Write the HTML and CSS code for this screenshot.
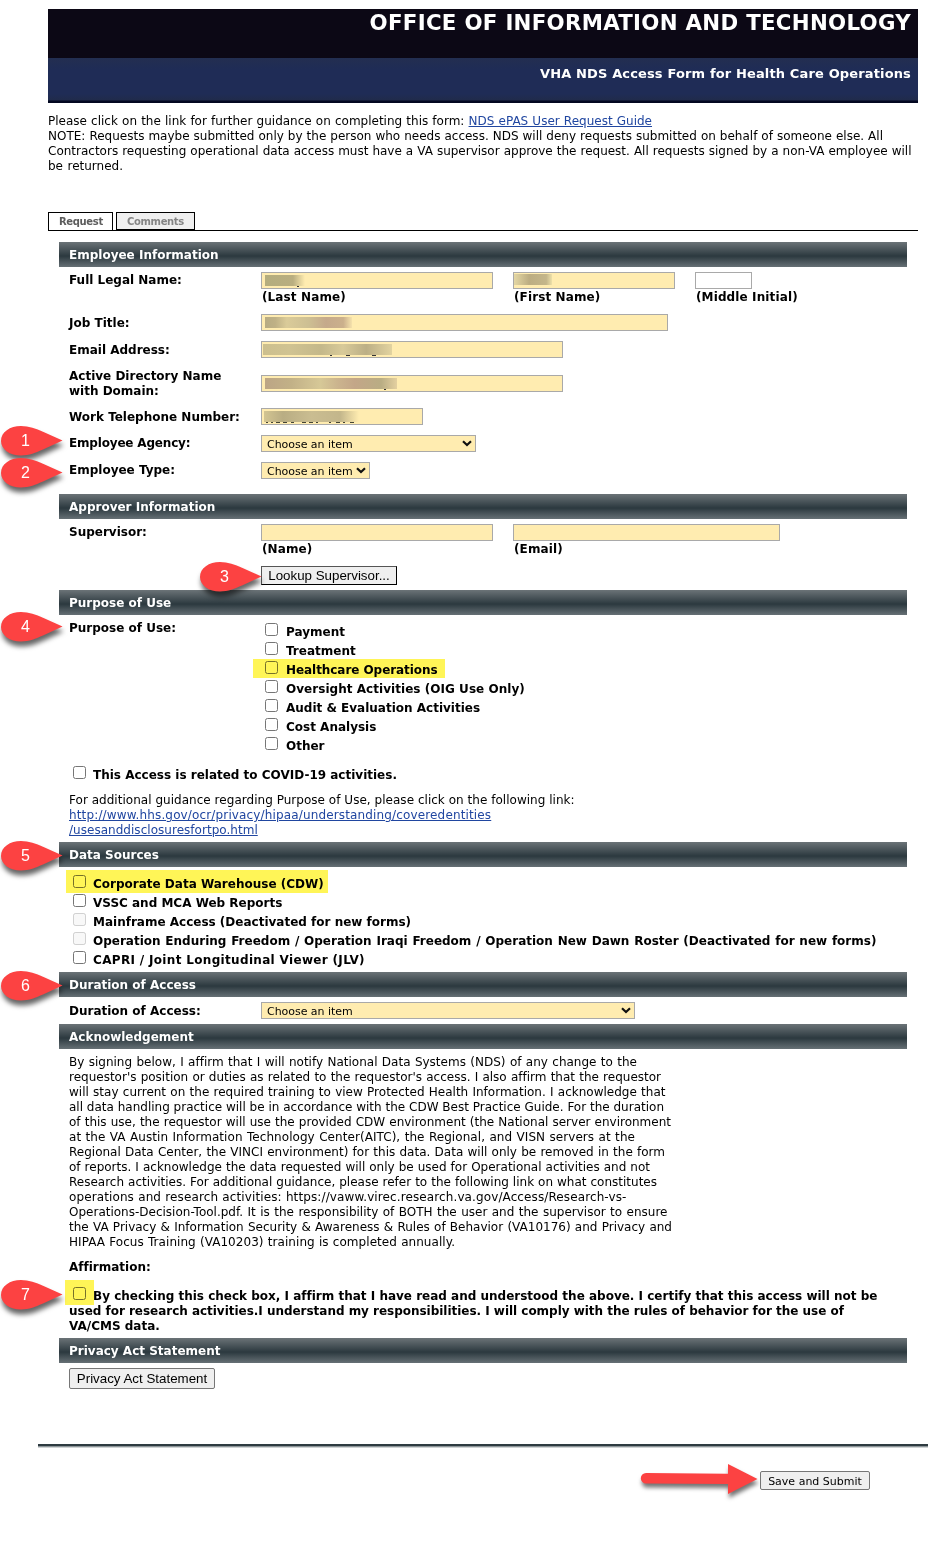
FILE: index.html
```html
<!DOCTYPE html>
<html lang="en">
<head>
<meta charset="utf-8">
<title>VHA NDS Access Form for Health Care Operations</title>
<link rel="stylesheet" href="styles.css">
</head>
<body>
<svg class="defs" width="0" height="0">
  <symbol id="pin" viewBox="0 0 62 30"><path d="M0 15C0 6 9 0 20 0C28 0 35 2.500 42 5.700L61.500 14.500L42 23.500C35 26.500 28 29.500 20 29.500C9 29.500 0 23.500 0 15Z" fill="#fc4242"/></symbol>
</svg>
<div class="page">
  <header class="banner">
    <h1 class="banner-title">OFFICE OF INFORMATION AND TECHNOLOGY</h1>
    <h2 class="banner-sub">VHA NDS Access Form for Health Care Operations</h2>
  </header>

  <div class="intro">
    <span class="line">Please click on the link for further guidance on completing this form: <a href="#">NDS ePAS User Request Guide</a></span>
    <span class="line">NOTE: Requests maybe submitted only by the person who needs access. NDS will deny requests submitted on behalf of someone else. All</span>
    <span class="line">Contractors requesting operational data access must have a VA supervisor approve the request. All requests signed by a non-VA employee will</span>
    <span class="line">be returned.</span>
  </div>

  <nav class="tabs"><span class="tab tab-on">Request</span><span class="tab">Comments</span></nav>

  <main class="form">
    <h3 class="bar">Employee Information</h3>
    <div class="body employee">
      <div class="row row-name"><label class="lab top">Full Legal Name:</label>
        <div class="fields">
          <div class="field w-last"><div class="box req"><i class="mask m1"></i></div><span>(Last Name)</span></div>
          <div class="field w-first"><div class="box req"><i class="mask m2"></i></div><span>(First Name)</span></div>
          <div class="field w-mi"><div class="box"></div><span>(Middle Initial)</span></div>
        </div></div>
      <div class="row"><label class="lab">Job Title:</label><div class="box req w-job"><i class="mask m3"></i></div></div>
      <div class="row"><label class="lab">Email Address:</label><div class="box req w-mail"><i class="mask m4"></i></div></div>
      <div class="row row-ad"><label class="lab top">Active Directory Name<br>with Domain:</label><div class="box req w-mail ad"><i class="mask m5"></i></div></div>
      <div class="row"><label class="lab">Work Telephone Number:</label><div class="box req w-first"><i class="mask m6"></i></div></div>
      <div class="row"><label class="lab top tight">Employee Agency:</label><select class="w-agency"><option>Choose an item</option></select></div>
      <div class="row row-last"><label class="lab top">Employee Type:</label><select class="w-type"><option>Choose an item</option></select></div>
    </div>

    <h3 class="bar">Approver Information</h3>
    <div class="body">
      <div class="row row-name"><label class="lab top">Supervisor:</label>
        <div class="fields">
          <div class="field w-last"><div class="box req"></div><span>(Name)</span></div>
          <div class="field w-supmail"><div class="box req"></div><span>(Email)</span></div>
        </div></div>
      <div class="row row-lookup"><span></span><button class="btn lookup">Lookup Supervisor...</button></div>
    </div>

    <h3 class="bar">Purpose of Use</h3>
    <div class="body purpose">
      <div class="row row-purpose"><span class="lab top">Purpose of Use:</span>
        <div class="checks">
          <label class="check"><input type="checkbox">Payment</label>
          <label class="check"><input type="checkbox">Treatment</label>
          <label class="check hl hl-health"><input type="checkbox">Healthcare Operations</label>
          <label class="check wide"><input type="checkbox">Oversight Activities (OIG Use Only)</label>
          <label class="check"><input type="checkbox">Audit &amp; Evaluation Activities</label>
          <label class="check"><input type="checkbox">Cost Analysis</label>
          <label class="check"><input type="checkbox">Other</label>
        </div></div>
      <label class="check covid"><input type="checkbox">This Access is related to COVID-19 activities.</label>
      <div class="guide">For additional guidance regarding Purpose of Use, please click on the following link:<br><a href="#"><span class="url">http://www.hhs.gov/ocr/privacy/hipaa/understanding/coveredentities</span><br>/usesanddisclosuresfortpo.html</a></div>
    </div>

    <h3 class="bar">Data Sources</h3>
    <div class="body sources">
      <label class="check hl hl-cdw"><input type="checkbox">Corporate Data Warehouse (CDW)</label>
      <label class="check"><input type="checkbox">VSSC and MCA Web Reports</label>
      <label class="check"><input type="checkbox" disabled>Mainframe Access (Deactivated for new forms)</label>
      <label class="check oef"><input type="checkbox" disabled>Operation Enduring Freedom / Operation Iraqi Freedom / Operation New Dawn Roster (Deactivated for new forms)</label>
      <label class="check capri"><input type="checkbox">CAPRI / Joint Longitudinal Viewer (JLV)</label>
    </div>

    <h3 class="bar">Duration of Access</h3>
    <div class="body">
      <div class="row row-duration"><label class="lab">Duration of Access:</label><select class="w-duration"><option>Choose an item</option></select></div>
    </div>

    <h3 class="bar">Acknowledgement</h3>
    <div class="body ack">
      <p class="ack-text">
        <span class="line">By signing below, I affirm that I will notify National Data Systems (NDS) of any change to the</span>
        <span class="line">requestor's position or duties as related to the requestor's access. I also affirm that the requestor</span>
        <span class="line">will stay current on the required training to view Protected Health Information. I acknowledge that</span>
        <span class="line">all data handling practice will be in accordance with the CDW Best Practice Guide. For the duration</span>
        <span class="line">of this use, the requestor will use the provided CDW environment (the National server environment</span>
        <span class="line">at the VA Austin Information Technology Center(AITC), the Regional, and VISN servers at the</span>
        <span class="line">Regional Data Center, the VINCI environment) for this data. Data will only be removed in the form</span>
        <span class="line">of reports. I acknowledge the data requested will only be used for Operational activities and not</span>
        <span class="line">Research activities. For additional guidance, please refer to the following link on what constitutes</span>
        <span class="line">operations and research activities: https://vaww.virec.research.va.gov/Access/Research-vs-</span>
        <span class="line">Operations-Decision-Tool.pdf. It is the responsibility of BOTH the user and the supervisor to ensure</span>
        <span class="line">the VA Privacy &amp; Information Security &amp; Awareness &amp; Rules of Behavior (VA10176) and Privacy and</span>
        <span class="line">HIPAA Focus Training (VA10203) training is completed annually.</span>
      </p>
      <p class="affirm-title">Affirmation:</p>
      <label class="affirm"><span class="hl hl-box"><input type="checkbox"></span>By checking this check box, I affirm that I have read and understood the above. I certify that this access will not be<br><span class="affirm-mid">used for research activities.I understand my responsibilities. I will comply with the rules of behavior for the use of</span><br>VA/CMS data.</label>
    </div>

    <h3 class="bar">Privacy Act Statement</h3>
    <div class="body privacy"><button class="btn">Privacy Act Statement</button></div>
  </main>

  <footer class="footer">
    <svg class="arrow" width="126" height="40" viewBox="0 0 126 40"><path d="M8 14L90 14.700V5L119.500 20L90 35V25L8 24.400A5.200 5.200 0 0 1 8 14Z" fill="#fc4242"/></svg>
    <button class="btn save">Save and Submit</button>
  </footer>

  <div class="pins">
    <div class="pin p1"><svg><use href="#pin"/></svg><b>1</b></div>
    <div class="pin p2"><svg><use href="#pin"/></svg><b>2</b></div>
    <div class="pin p3"><svg><use href="#pin"/></svg><b>3</b></div>
    <div class="pin p4"><svg><use href="#pin"/></svg><b>4</b></div>
    <div class="pin p5"><svg><use href="#pin"/></svg><b>5</b></div>
    <div class="pin p6"><svg><use href="#pin"/></svg><b>6</b></div>
    <div class="pin p7"><svg><use href="#pin"/></svg><b>7</b></div>
  </div>
</div>
</body>
</html>
```

FILE: styles.css
```css
* { box-sizing: border-box; }
body { margin: 0; background: #fff; color: #000; font: 12px/15px Verdana, "DejaVu Sans", sans-serif; font-variant-ligatures: none; }
h1, h2, h3, p { margin: 0; }
a { color: #2046a0; text-decoration: underline; }
.defs { display: block; }
.page { position: relative; width: 932px; height: 1562px; overflow: hidden; padding-top: 9px; white-space: nowrap; }
.line { display: block; white-space: normal; text-align-last: justify; height: 15px; white-space: nowrap; }

/* banner */
.banner { margin: 0 14px 0 48px; height: 94px; color: #fff; text-align: right; background: linear-gradient(#0c0815 0 49px, #232e50 49px, #1f2c56 60px, #1f2c56 85px, #202b4b 91px, #020720 92px 94px); }
.banner-title { height: 49px; padding-right: 7px; font-size: 21.300px; line-height: 27px; letter-spacing: .3px; }
.banner-sub { padding: 8px 7px 0 0; font-size: 13px; line-height: 16px; letter-spacing: .14px; }

.intro { margin: 11px 0 0 48px; height: 98px; }
.intro .line:nth-child(1) { width: 604px; }
.intro .line:nth-child(2) { width: 835px; }
.intro .line:nth-child(3) { width: 863.500px; }
.intro .line:nth-child(4) { width: 75px; }

/* tabs */
.tabs { display: flex; gap: 3px; height: 19px; margin: 0 14px 11px 48px; border-bottom: 1px solid #000; }
.tab { height: 18px; border: 1px solid #000; padding: 0 10px; font: bold 10px/18px Verdana, "DejaVu Sans", sans-serif; letter-spacing: -.35px; color: #858585; background: #efefef; width: 79px; }
.tab-on { color: #5c5c5c; background: #fff; width: 65px; border-bottom: 0; }

/* form sections */
.form { margin: 0 25px 0 59px; }
.bar { height: 25px; padding-left: 10px; font-size: 12px; line-height: 27px; color: #fff; background: linear-gradient(#6b7377, #2e3b41 54%, #2e3b41 58%, #667075); }
.body { padding: 5px 10px 0; }
.row { display: grid; grid-template-columns: 192px auto; justify-content: start; align-items: start; height: 27px; }
.row-name { height: 42px; }
.row-ad { height: 40px; }
.row-last { height: 32px; }
.row-lookup { height: 24px; }
.row-duration { height: 22px; }
.row-purpose { height: 146px; }
.lab { font-weight: bold; padding-top: 2px; }
.lab.top { padding-top: 1px; }
.tight { letter-spacing: -.18px; }
.fields { display: flex; gap: 20px; }
.field span { display: block; font-weight: bold; padding: 1px 0 0 1px; letter-spacing: .12px; }
.box { position: relative; height: 17px; border: 1px solid #a9a9a9; background: #fff; }
.req, select { background-color: #ffecb0; }
.ad { margin-top: 7px; }
.w-last { width: 232px; }
.w-first { width: 162px; }
.w-mi { width: 57px; }
.w-job { width: 407px; }
.w-mail { width: 302px; }
.w-supmail { width: 267px; }
.w-agency { width: 215px; }
.w-type { width: 109px; }
.w-duration { width: 374px; }
select { appearance: none; height: 17px; margin: 0; padding: 1px 0 0 5px; border: 1px solid #a9a9a9; border-radius: 0; font: 11px/15px Verdana, "DejaVu Sans", sans-serif; letter-spacing: -.04px; color: #000; background-image: url("data:image/svg+xml,%3Csvg xmlns='http://www.w3.org/2000/svg' width='10' height='7'%3E%3Cpath d='M1 1.200L5 5L9 1.200' fill='none' stroke='%23101010' stroke-width='2.200'/%3E%3C/svg%3E"); background-repeat: no-repeat; background-position: right 3px top 4px; }

/* redacted values */
.mask { display: block; position: absolute; left: 3px; top: 2px; height: 11px; }
.m1 { width: 40px; background: linear-gradient(90deg, #b4ad7e, #b9ae80 70%, #ffecb0); }
.m2 { left: 0; width: 38px; top: 1px; background: linear-gradient(90deg, #e4d7a4, #bcad82 40%, #c4b68a 85%, #ede0a9); }
.m3 { width: 87px; background: linear-gradient(90deg, #b7ab83, #bfb186 12%, #dacb99 25%, #cdbf93 50%, #c5a98b 70%, #cbb08c 90%, #f5e2ac); }
.m4 { left: 1px; width: 129px; background: linear-gradient(90deg, #ccbf8e, #d0c392 20%, #c4b88a 45%, #d8ca99 62%, #bcaf85 80%, #e2d3a0); }
.m5 { width: 132px; background: linear-gradient(90deg, #bca585, #c2b187 20%, #d6c897 42%, #cbb48e 55%, #c3a688 68%, #b9ad84 88%, #e4d0a0); }
.m6 { left: 2px; width: 95px; background: linear-gradient(90deg, #d3c592, #b9ad83 20%, #cabd91 50%, #c3b68b 80%, #ffecb0); }
.m4::after, .m5::after, .m6::after, .m1::after { content: ""; position: absolute; top: 11px; height: 1px; }
.m1::after { left: 32px; width: 2px; background: #333; }
.m4::after { left: 67px; width: 46px; background: linear-gradient(90deg, #333 0 2px, transparent 2px 16px, #333 16px 20px, transparent 20px 42px, #333 42px); }
.m5::after { left: 119px; width: 2px; background: #333; }
.m6::after { left: 2px; width: 88px; background: linear-gradient(90deg, #443 0 2px, transparent 2px 5px, #443 5px 7px, transparent 7px 10px, #443 10px 14px, transparent 14px 17px, #443 17px 21px, transparent 21px 25px, #443 25px 28px, transparent 28px 36px, #443 36px 40px, transparent 40px 43px, #443 43px 47px, transparent 47px 50px, #443 50px 52px, transparent 52px 63px, #443 63px 65px, transparent 65px 70px, #443 70px 74px, transparent 74px 77px, #443 77px 79px, transparent 79px 84px, #443 84px); }

/* buttons */
.btn { height: 21px; width: 146px; padding: 0; border: 1px solid #767676; border-radius: 2px; background: #efefef; color: #000; font: 13.333px/18px "Liberation Sans", Arial, sans-serif; white-space: nowrap; }
.lookup { width: 136px; height: 19px; border-color: #555 #000 #000 #555; border-radius: 0; line-height: 16px; }

/* checkboxes */
.check, .affirm { font-weight: bold; }
.check { position: relative; display: flex; height: 19px; line-height: 19px; }
.check input, .affirm input { flex: none; width: 13px; height: 13px; margin: 0 8px 0 4px; }
.check input { margin-right: 8px; }
.wide { letter-spacing: .04px; }
.checks { padding-top: 3px; }
.covid { height: 26px; }
.covid input, .sources input { margin-right: 7px; }
.sources { padding-top: 8px; height: 105px; }
.oef { word-spacing: .6px; }
.capri { letter-spacing: .33px; }
.guide { height: 50px; padding-top: 1px; letter-spacing: .03px; }
.url { letter-spacing: .145px; }
.hl::before { content: ""; position: absolute; background: #fff557; mix-blend-mode: multiply; z-index: 1; }
.hl-health { letter-spacing: -.06px; }
.hl-health::before { left: -8px; top: -2px; width: 192px; height: 19px; }
.hl-cdw::before { left: -3px; top: -5px; width: 262px; height: 23px; }
.hl-box { position: relative; display: inline-block; width: 24px; height: 13px; vertical-align: 0; }
.hl-box::before { left: -4px; top: -7px; width: 29px; height: 25px; }

/* acknowledgement */
.ack { height: 289px; }
.ack-text { height: 205px; padding-top: 1px; }
.ack-text .line:nth-child(1) { width: 568px; }
.ack-text .line:nth-child(2) { width: 592px; }
.ack-text .line:nth-child(3) { width: 596.500px; }
.ack-text .line:nth-child(4) { width: 595px; }
.ack-text .line:nth-child(5) { width: 602px; }
.ack-text .line:nth-child(6) { width: 566px; letter-spacing: .06px; }
.ack-text .line:nth-child(7) { width: 596px; }
.ack-text .line:nth-child(8) { width: 581px; }
.ack-text .line:nth-child(9) { width: 588px; }
.ack-text .line:nth-child(10) { width: 557.500px; letter-spacing: .11px; }
.ack-text .line:nth-child(11) { width: 598.500px; }
.ack-text .line:nth-child(12) { width: 603px; }
.ack-text .line:nth-child(13) { width: 386px; letter-spacing: .05px; }
.affirm-title { font-weight: bold; height: 28px; padding-top: 1px; }
.affirm { display: block; }
.affirm-mid { letter-spacing: -.025px; }
.affirm input { display: block; margin: 0 0 0 4px; }

.privacy { height: 81px; }

/* footer */
.footer { display: flex; margin-left: 38px; width: 890px; border-top: 2px solid #2e3b41; box-shadow: inset 0 1px #8d9599, inset 0 2px #d0d4d5; }
.arrow { margin: 13px 0 0 600px; filter: drop-shadow(1px 4px 2px rgba(0,0,0,.55)); flex: none; }
.save { width: 110px; height: 19px; margin: 25px 0 0 -4px; padding-top: 1px; font: 11px/17px Verdana, "DejaVu Sans", sans-serif; }

/* numbered callouts */
.pin { position: absolute; left: 1px; width: 62px; height: 30px; color: #fff; font: 16px/30px "Liberation Sans", Arial, sans-serif; }
.pin svg { position: absolute; left: 0; top: 0; width: 62px; height: 30px; overflow: visible; filter: drop-shadow(1px 5px 2.500px rgba(0,0,0,.6)); }
.pin b { position: absolute; left: 0; width: 49px; text-align: center; font-weight: normal; }
.p1 { top: 426px; }
.p2 { top: 458px; }
.p3 { top: 562px; left: 200px; }
.p4 { top: 612px; }
.p5 { top: 841px; }
.p6 { top: 971px; }
.p7 { top: 1280px; }
```
